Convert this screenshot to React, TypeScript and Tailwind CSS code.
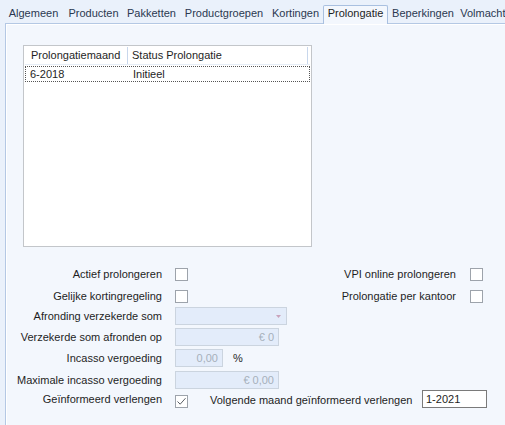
import React from "react";

const TABS: [string, string][] = [
  ["Algemeen", "w-[61px]"],
  ["Producten", "w-[59px]"],
  ["Pakketten", "w-[57px]"],
  ["Productgroepen", "w-[88px]"],
  ["Kortingen", "w-[55px]"],
  ["Prolongatie", "w-[65px]"],
  ["Beperkingen", "w-[70px]"],
  ["Volmachten", "w-[62px]"],
];

function CheckBox({ checked = false }: { checked?: boolean }) {
  return (
    <div className="w-[13px] h-[13px] bg-white border border-[#9da3ab] flex items-center justify-center shrink-0">
      {checked && (
        <svg width="11" height="11" viewBox="0 0 11 11">
          <path d="M1.5 5.5 L4.2 8.2 L9.5 2.2" fill="none" stroke="#5a5f66" strokeWidth="1" />
        </svg>
      )}
    </div>
  );
}

function DisabledInput({ value, width }: { value: string; width: string }) {
  return (
    <div
      className={`${width} h-[18px] bg-[#e3ecfa] border border-[#cbd4df] text-[#a6b0bb] text-right pr-[4px] leading-[16px]`}
    >
      {value}
    </div>
  );
}

function Label({ children }: { children: React.ReactNode }) {
  return <div className="w-[155px] text-right shrink-0 whitespace-nowrap">{children}</div>;
}

export default function App() {
  return (
    <div
      className="w-[505px] h-[425px] overflow-hidden bg-[#eaf1fb] text-[11px] text-[#1e1e1e] flex flex-col"
      style={{ fontFamily: '"Liberation Sans", Arial, sans-serif' }}
    >
      {/* tab strip */}
      <div className="flex items-end pl-[3px] pt-[5px] h-[23px] relative z-10 whitespace-nowrap">
        {TABS.map(([t, w]) =>
          t === "Prolongatie" ? (
            <div
              key={t}
              className={`${w} shrink-0 text-center h-[19px] mb-[-1px] bg-[#f3f7fd] border border-b-0 border-[#a9c0e0] rounded-t-[2px] leading-[15px] text-[#1e1e1e]`}
            >
              {t}
            </div>
          ) : (
            <div key={t} className={`${w} shrink-0 text-center h-[17px] leading-[15px] text-[#2a3850]`}>
              {t}
            </div>
          )
        )}
      </div>

      {/* panel */}
      <div className="ml-[5px] flex-1 border-l border-t border-[#b4c8e4] bg-[#f3f7fd]">
        <div className="h-full border-l border-t border-[#ffffff] pl-[16px] pt-[20px] flex flex-col">
          {/* grid */}
          <div className="w-[289px] h-[202px] bg-white border border-[#c3c6ca] p-[1px]">
            <div className="flex h-[18px] leading-[17px] border-b border-[#e6edf6]">
              <div className="w-[103px] pl-[6px] border-r border-[#c8d7ec] whitespace-nowrap">Prolongatiemaand</div>
              <div className="w-[180px] pl-[4px] border-r border-[#c8d7ec]">Status Prolongatie</div>
            </div>
            <div className="flex h-[16px] mt-[1px] leading-[14px] border border-dotted border-[#555]">
              <div className="w-[103px] pl-[4px]">6-2018</div>
              <div className="pl-[4px]">Initieel</div>
            </div>
          </div>

          {/* form */}
          <div className="flex flex-col pr-[22px] mt-[16px] -ml-[16px]">
            <div className="flex items-center h-[22px]">
              <Label>Actief prolongeren</Label>
              <div className="ml-[13px]">
                <CheckBox />
              </div>
              <div className="flex-1" />
              <div className="mr-[14px] whitespace-nowrap">VPI online prolongeren</div>
              <CheckBox />
            </div>
            <div className="flex items-center h-[22px]">
              <Label>Gelijke kortingregeling</Label>
              <div className="ml-[13px]">
                <CheckBox />
              </div>
              <div className="flex-1" />
              <div className="mr-[14px] whitespace-nowrap">Prolongatie per kantoor</div>
              <CheckBox />
            </div>
            <div className="flex items-center h-[18px]">
              <Label>Afronding verzekerde som</Label>
              <div className="ml-[13px] w-[112px] h-[18px] bg-[#e3ecfa] border border-[#cbd4df] flex items-center justify-end pr-[5px]">
                <svg width="5" height="3" viewBox="0 0 5 3">
                  <path d="M0 0 L5 0 L2.5 3 Z" fill="#c9a3bb" />
                </svg>
              </div>
            </div>
            <div className="flex items-center h-[18px] mt-[3px]">
              <Label>Verzekerde som afronden op</Label>
              <div className="ml-[13px]">
                <DisabledInput value="€ 0" width="w-[104px]" />
              </div>
            </div>
            <div className="flex items-center h-[18px] mt-[3px]">
              <Label>Incasso vergoeding</Label>
              <div className="ml-[13px]">
                <DisabledInput value="0,00" width="w-[48px]" />
              </div>
              <div className="ml-[10px]">%</div>
            </div>
            <div className="flex items-center h-[18px] mt-[4px]">
              <Label>Maximale incasso vergoeding</Label>
              <div className="ml-[13px]">
                <DisabledInput value="€ 0,00" width="w-[104px]" />
              </div>
            </div>
            <div className="flex items-center h-[18px] mt-[1px]">
              <Label>Geïnformeerd verlengen</Label>
              <div className="ml-[13px] mt-[4px]">
                <CheckBox checked />
              </div>
              <div className="ml-[22px] mt-[2px] whitespace-nowrap">Volgende maand geïnformeerd verlengen</div>
              <div className="ml-auto mr-[-4px] shrink-0 w-[65px] h-[18px] bg-white border border-[#7a7a7a] pl-[3px] leading-[16px]">
                1-2021
              </div>
            </div>
          </div>
        </div>
      </div>
    </div>
  );
}
